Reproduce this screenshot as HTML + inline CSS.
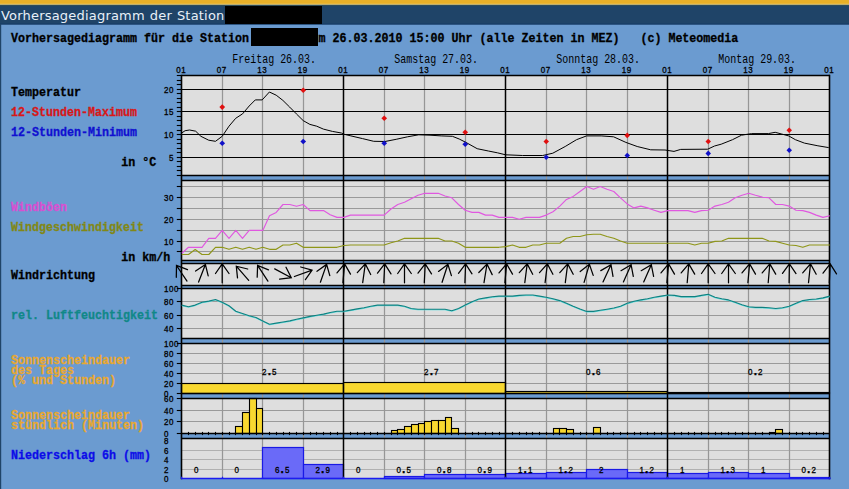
<!DOCTYPE html>
<html lang="de"><head><meta charset="utf-8"><title>Vorhersagediagramm</title>
<style>
html,body{margin:0;padding:0}
body{width:849px;height:489px;overflow:hidden;position:relative;background:#6b9bd0;font-family:"DejaVu Sans","Liberation Sans",sans-serif}
#stripe{position:absolute;left:0;top:0;width:849px;height:4.7px;background:#e8b030;border-bottom:0.6px solid #b08830;box-sizing:border-box}
#bar{position:absolute;left:0;top:5px;width:849px;height:19px}
#bar span{position:absolute;left:1px;top:2.5px;font-size:13px;line-height:16px;color:#e8f0f8;white-space:nowrap;letter-spacing:0.2px;word-spacing:0.6px}
#edge{position:absolute;left:0;top:24px;width:1.2px;height:465px;background:#1f4468}
.blk{position:absolute;background:#000}
</style></head><body>
<svg width="849" height="489" viewBox="0 0 849 489" style="position:absolute;left:0;top:0">
<rect x="0" y="0" width="849" height="4" fill="#e8b028"/>
<rect x="0" y="3.8" width="849" height="1.1" fill="#efd480"/>
<rect x="0" y="4.8" width="849" height="0.9" fill="#26341c"/>
<rect x="0" y="5.6" width="849" height="18.9" fill="#1f4468"/>
<rect x="0" y="23.4" width="849" height="1.1" fill="#163c68"/>
<rect x="0" y="24" width="1.2" height="465" fill="#1f4468"/>
<rect x="181.75" y="75.5" width="648.0" height="100.0" fill="#dedede"/>
<rect x="181.75" y="180.5" width="648.0" height="80.0" fill="#dedede"/>
<rect x="181.75" y="263.5" width="648.0" height="22.0" fill="#dedede"/>
<rect x="181.75" y="288.5" width="648.0" height="50.0" fill="#dedede"/>
<rect x="181.75" y="343.5" width="648.0" height="50.0" fill="#dedede"/>
<rect x="181.75" y="398.5" width="648.0" height="35.0" fill="#dedede"/>
<rect x="181.75" y="438.5" width="648.0" height="40.0" fill="#dedede"/>
<line x1="181.75" y1="251.50" x2="829.75" y2="251.50" stroke="#9a9a9a" stroke-width="1.15"/>
<line x1="181.75" y1="241.50" x2="829.75" y2="241.50" stroke="#9a9a9a" stroke-width="1.15"/>
<line x1="181.75" y1="230.50" x2="829.75" y2="230.50" stroke="#9a9a9a" stroke-width="1.15"/>
<line x1="181.75" y1="219.50" x2="829.75" y2="219.50" stroke="#9a9a9a" stroke-width="1.15"/>
<line x1="181.75" y1="208.50" x2="829.75" y2="208.50" stroke="#9a9a9a" stroke-width="1.15"/>
<line x1="181.75" y1="197.50" x2="829.75" y2="197.50" stroke="#9a9a9a" stroke-width="1.15"/>
<line x1="181.75" y1="186.50" x2="829.75" y2="186.50" stroke="#9a9a9a" stroke-width="1.15"/>
<line x1="181.75" y1="328.50" x2="829.75" y2="328.50" stroke="#9a9a9a" stroke-width="1.15"/>
<line x1="181.75" y1="315.50" x2="829.75" y2="315.50" stroke="#9a9a9a" stroke-width="1.15"/>
<line x1="181.75" y1="301.50" x2="829.75" y2="301.50" stroke="#9a9a9a" stroke-width="1.15"/>
<line x1="181.75" y1="383.50" x2="829.75" y2="383.50" stroke="#9a9a9a" stroke-width="1.15"/>
<line x1="181.75" y1="373.50" x2="829.75" y2="373.50" stroke="#9a9a9a" stroke-width="1.15"/>
<line x1="181.75" y1="363.50" x2="829.75" y2="363.50" stroke="#9a9a9a" stroke-width="1.15"/>
<line x1="181.75" y1="353.50" x2="829.75" y2="353.50" stroke="#9a9a9a" stroke-width="1.15"/>
<line x1="181.75" y1="421.50" x2="829.75" y2="421.50" stroke="#9a9a9a" stroke-width="1.15"/>
<line x1="181.75" y1="410.50" x2="829.75" y2="410.50" stroke="#9a9a9a" stroke-width="1.15"/>
<line x1="181.75" y1="469.50" x2="829.75" y2="469.50" stroke="#b0b0b0" stroke-width="1.15"/>
<line x1="181.75" y1="459.50" x2="829.75" y2="459.50" stroke="#b0b0b0" stroke-width="1.15"/>
<line x1="181.75" y1="450.50" x2="829.75" y2="450.50" stroke="#b0b0b0" stroke-width="1.15"/>
<line x1="222.50" y1="75.50" x2="222.50" y2="478.50" stroke="#969696" stroke-width="1.25"/>
<line x1="262.50" y1="75.50" x2="262.50" y2="478.50" stroke="#969696" stroke-width="1.25"/>
<line x1="303.50" y1="75.50" x2="303.50" y2="478.50" stroke="#969696" stroke-width="1.25"/>
<line x1="384.50" y1="75.50" x2="384.50" y2="478.50" stroke="#969696" stroke-width="1.25"/>
<line x1="424.50" y1="75.50" x2="424.50" y2="478.50" stroke="#969696" stroke-width="1.25"/>
<line x1="465.50" y1="75.50" x2="465.50" y2="478.50" stroke="#969696" stroke-width="1.25"/>
<line x1="546.50" y1="75.50" x2="546.50" y2="478.50" stroke="#969696" stroke-width="1.25"/>
<line x1="586.50" y1="75.50" x2="586.50" y2="478.50" stroke="#969696" stroke-width="1.25"/>
<line x1="627.50" y1="75.50" x2="627.50" y2="478.50" stroke="#969696" stroke-width="1.25"/>
<line x1="708.50" y1="75.50" x2="708.50" y2="478.50" stroke="#969696" stroke-width="1.25"/>
<line x1="748.50" y1="75.50" x2="748.50" y2="478.50" stroke="#969696" stroke-width="1.25"/>
<line x1="789.50" y1="75.50" x2="789.50" y2="478.50" stroke="#969696" stroke-width="1.25"/>
<rect x="181.50" y="383.50" width="162.00" height="10.00" fill="#f8d830" stroke="#000" stroke-width="1.15"/>
<rect x="343.50" y="382.50" width="162.00" height="11.00" fill="#f8d830" stroke="#000" stroke-width="1.15"/>
<rect x="505.50" y="391.50" width="162.00" height="2.00" fill="#f8d830" stroke="#000" stroke-width="1.15"/>
<rect x="667.50" y="392.50" width="162.00" height="1.00" fill="#f8d830" stroke="#000" stroke-width="1.15"/>
<rect x="235.50" y="426.50" width="7.00" height="7.00" fill="#f8d830" stroke="#000" stroke-width="1.1"/>
<rect x="242.50" y="412.50" width="7.00" height="21.00" fill="#f8d830" stroke="#000" stroke-width="1.1"/>
<rect x="249.50" y="398.50" width="7.00" height="35.00" fill="#f8d830" stroke="#000" stroke-width="1.1"/>
<rect x="256.50" y="408.50" width="6.00" height="25.00" fill="#f8d830" stroke="#000" stroke-width="1.1"/>
<rect x="391.50" y="430.50" width="6.00" height="3.00" fill="#f8d830" stroke="#000" stroke-width="1.1"/>
<rect x="397.50" y="429.50" width="7.00" height="4.00" fill="#f8d830" stroke="#000" stroke-width="1.1"/>
<rect x="404.50" y="426.50" width="7.00" height="7.00" fill="#f8d830" stroke="#000" stroke-width="1.1"/>
<rect x="411.50" y="424.50" width="7.00" height="9.00" fill="#f8d830" stroke="#000" stroke-width="1.1"/>
<rect x="418.50" y="423.50" width="6.00" height="10.00" fill="#f8d830" stroke="#000" stroke-width="1.1"/>
<rect x="424.50" y="421.50" width="7.00" height="12.00" fill="#f8d830" stroke="#000" stroke-width="1.1"/>
<rect x="431.50" y="420.50" width="7.00" height="13.00" fill="#f8d830" stroke="#000" stroke-width="1.1"/>
<rect x="438.50" y="420.50" width="7.00" height="13.00" fill="#f8d830" stroke="#000" stroke-width="1.1"/>
<rect x="445.50" y="417.50" width="6.00" height="16.00" fill="#f8d830" stroke="#000" stroke-width="1.1"/>
<rect x="451.50" y="428.50" width="7.00" height="5.00" fill="#f8d830" stroke="#000" stroke-width="1.1"/>
<rect x="553.50" y="428.50" width="6.00" height="5.00" fill="#f8d830" stroke="#000" stroke-width="1.1"/>
<rect x="559.50" y="428.50" width="7.00" height="5.00" fill="#f8d830" stroke="#000" stroke-width="1.1"/>
<rect x="566.50" y="429.50" width="7.00" height="4.00" fill="#f8d830" stroke="#000" stroke-width="1.1"/>
<rect x="593.50" y="427.50" width="7.00" height="6.00" fill="#f8d830" stroke="#000" stroke-width="1.1"/>
<rect x="769.50" y="432.50" width="6.00" height="1.00" fill="#f8d830" stroke="#000" stroke-width="1.1"/>
<rect x="775.50" y="429.50" width="7.00" height="4.00" fill="#f8d830" stroke="#000" stroke-width="1.1"/>
<rect x="262.50" y="447.50" width="41.00" height="31.00" fill="#6a6af8" stroke="#1a1ae4" stroke-width="1.2"/>
<rect x="303.50" y="464.50" width="40.00" height="14.00" fill="#6a6af8" stroke="#1a1ae4" stroke-width="1.2"/>
<rect x="384.50" y="476.50" width="40.00" height="2.00" fill="#6a6af8" stroke="#1a1ae4" stroke-width="1.2"/>
<rect x="424.50" y="474.50" width="41.00" height="4.00" fill="#6a6af8" stroke="#1a1ae4" stroke-width="1.2"/>
<rect x="465.50" y="474.50" width="40.00" height="4.00" fill="#6a6af8" stroke="#1a1ae4" stroke-width="1.2"/>
<rect x="505.50" y="473.50" width="41.00" height="5.00" fill="#6a6af8" stroke="#1a1ae4" stroke-width="1.2"/>
<rect x="546.50" y="472.50" width="40.00" height="6.00" fill="#6a6af8" stroke="#1a1ae4" stroke-width="1.2"/>
<rect x="586.50" y="469.50" width="41.00" height="9.00" fill="#6a6af8" stroke="#1a1ae4" stroke-width="1.2"/>
<rect x="627.50" y="472.50" width="40.00" height="6.00" fill="#6a6af8" stroke="#1a1ae4" stroke-width="1.2"/>
<rect x="667.50" y="473.50" width="41.00" height="5.00" fill="#6a6af8" stroke="#1a1ae4" stroke-width="1.2"/>
<rect x="708.50" y="472.50" width="40.00" height="6.00" fill="#6a6af8" stroke="#1a1ae4" stroke-width="1.2"/>
<rect x="748.50" y="473.50" width="41.00" height="5.00" fill="#6a6af8" stroke="#1a1ae4" stroke-width="1.2"/>
<rect x="789.50" y="477.50" width="40.00" height="1.00" fill="#6a6af8" stroke="#1a1ae4" stroke-width="1.2"/>
<line x1="181.75" y1="157.50" x2="829.75" y2="157.50" stroke="#000" stroke-width="1.15"/>
<line x1="181.75" y1="134.50" x2="829.75" y2="134.50" stroke="#000" stroke-width="1.15"/>
<line x1="181.75" y1="111.50" x2="829.75" y2="111.50" stroke="#000" stroke-width="1.15"/>
<line x1="181.75" y1="89.50" x2="829.75" y2="89.50" stroke="#000" stroke-width="1.15"/>
<line x1="181.75" y1="75.50" x2="829.75" y2="75.50" stroke="#000" stroke-width="1.5"/>
<line x1="181.75" y1="175.50" x2="829.75" y2="175.50" stroke="#000" stroke-width="1.5"/>
<line x1="181.75" y1="180.50" x2="829.75" y2="180.50" stroke="#000" stroke-width="1.5"/>
<line x1="181.75" y1="260.50" x2="829.75" y2="260.50" stroke="#000" stroke-width="1.5"/>
<line x1="181.75" y1="263.50" x2="829.75" y2="263.50" stroke="#000" stroke-width="1.5"/>
<line x1="181.75" y1="285.50" x2="829.75" y2="285.50" stroke="#000" stroke-width="1.5"/>
<line x1="181.75" y1="288.50" x2="829.75" y2="288.50" stroke="#000" stroke-width="1.5"/>
<line x1="181.75" y1="338.50" x2="829.75" y2="338.50" stroke="#000" stroke-width="1.5"/>
<line x1="181.75" y1="343.50" x2="829.75" y2="343.50" stroke="#000" stroke-width="1.5"/>
<line x1="181.75" y1="393.50" x2="829.75" y2="393.50" stroke="#000" stroke-width="1.5"/>
<line x1="181.75" y1="398.50" x2="829.75" y2="398.50" stroke="#000" stroke-width="1.5"/>
<line x1="181.75" y1="433.50" x2="829.75" y2="433.50" stroke="#000" stroke-width="1.5"/>
<line x1="181.75" y1="438.50" x2="829.75" y2="438.50" stroke="#000" stroke-width="1.5"/>
<line x1="343.50" y1="75.50" x2="343.50" y2="478.50" stroke="#000" stroke-width="1.5"/>
<line x1="505.50" y1="75.50" x2="505.50" y2="478.50" stroke="#000" stroke-width="1.5"/>
<line x1="667.50" y1="75.50" x2="667.50" y2="478.50" stroke="#000" stroke-width="1.5"/>
<line x1="181.50" y1="74.80" x2="181.50" y2="479.20" stroke="#000" stroke-width="1.6"/>
<line x1="829.50" y1="74.80" x2="829.50" y2="479.20" stroke="#000" stroke-width="1.6"/>
<line x1="180.95" y1="478.50" x2="830.55" y2="478.50" stroke="#1c1cf0" stroke-width="1.7"/>
<line x1="181.50" y1="476.70" x2="181.50" y2="479.00" stroke="#1c1cf0" stroke-width="1.2"/>
<line x1="222.50" y1="476.70" x2="222.50" y2="479.00" stroke="#1c1cf0" stroke-width="1.2"/>
<line x1="262.50" y1="476.70" x2="262.50" y2="479.00" stroke="#1c1cf0" stroke-width="1.2"/>
<line x1="303.50" y1="476.70" x2="303.50" y2="479.00" stroke="#1c1cf0" stroke-width="1.2"/>
<line x1="343.50" y1="476.70" x2="343.50" y2="479.00" stroke="#1c1cf0" stroke-width="1.2"/>
<line x1="384.50" y1="476.70" x2="384.50" y2="479.00" stroke="#1c1cf0" stroke-width="1.2"/>
<line x1="424.50" y1="476.70" x2="424.50" y2="479.00" stroke="#1c1cf0" stroke-width="1.2"/>
<line x1="465.50" y1="476.70" x2="465.50" y2="479.00" stroke="#1c1cf0" stroke-width="1.2"/>
<line x1="505.50" y1="476.70" x2="505.50" y2="479.00" stroke="#1c1cf0" stroke-width="1.2"/>
<line x1="546.50" y1="476.70" x2="546.50" y2="479.00" stroke="#1c1cf0" stroke-width="1.2"/>
<line x1="586.50" y1="476.70" x2="586.50" y2="479.00" stroke="#1c1cf0" stroke-width="1.2"/>
<line x1="627.50" y1="476.70" x2="627.50" y2="479.00" stroke="#1c1cf0" stroke-width="1.2"/>
<line x1="667.50" y1="476.70" x2="667.50" y2="479.00" stroke="#1c1cf0" stroke-width="1.2"/>
<line x1="708.50" y1="476.70" x2="708.50" y2="479.00" stroke="#1c1cf0" stroke-width="1.2"/>
<line x1="748.50" y1="476.70" x2="748.50" y2="479.00" stroke="#1c1cf0" stroke-width="1.2"/>
<line x1="789.50" y1="476.70" x2="789.50" y2="479.00" stroke="#1c1cf0" stroke-width="1.2"/>
<line x1="829.50" y1="476.70" x2="829.50" y2="479.00" stroke="#1c1cf0" stroke-width="1.2"/>
<line x1="176.80" y1="175.50" x2="181.75" y2="175.50" stroke="#000" stroke-width="1.1"/>
<line x1="176.80" y1="170.50" x2="181.75" y2="170.50" stroke="#000" stroke-width="1.1"/>
<line x1="176.80" y1="166.50" x2="181.75" y2="166.50" stroke="#000" stroke-width="1.1"/>
<line x1="176.80" y1="161.50" x2="181.75" y2="161.50" stroke="#000" stroke-width="1.1"/>
<line x1="176.80" y1="157.50" x2="181.75" y2="157.50" stroke="#000" stroke-width="1.1"/>
<line x1="176.80" y1="152.50" x2="181.75" y2="152.50" stroke="#000" stroke-width="1.1"/>
<line x1="176.80" y1="148.50" x2="181.75" y2="148.50" stroke="#000" stroke-width="1.1"/>
<line x1="176.80" y1="143.50" x2="181.75" y2="143.50" stroke="#000" stroke-width="1.1"/>
<line x1="176.80" y1="139.50" x2="181.75" y2="139.50" stroke="#000" stroke-width="1.1"/>
<line x1="176.80" y1="134.50" x2="181.75" y2="134.50" stroke="#000" stroke-width="1.1"/>
<line x1="176.80" y1="130.50" x2="181.75" y2="130.50" stroke="#000" stroke-width="1.1"/>
<line x1="176.80" y1="125.50" x2="181.75" y2="125.50" stroke="#000" stroke-width="1.1"/>
<line x1="176.80" y1="120.50" x2="181.75" y2="120.50" stroke="#000" stroke-width="1.1"/>
<line x1="176.80" y1="116.50" x2="181.75" y2="116.50" stroke="#000" stroke-width="1.1"/>
<line x1="176.80" y1="111.50" x2="181.75" y2="111.50" stroke="#000" stroke-width="1.1"/>
<line x1="176.80" y1="107.50" x2="181.75" y2="107.50" stroke="#000" stroke-width="1.1"/>
<line x1="176.80" y1="102.50" x2="181.75" y2="102.50" stroke="#000" stroke-width="1.1"/>
<line x1="176.80" y1="98.50" x2="181.75" y2="98.50" stroke="#000" stroke-width="1.1"/>
<line x1="176.80" y1="93.50" x2="181.75" y2="93.50" stroke="#000" stroke-width="1.1"/>
<line x1="176.80" y1="89.50" x2="181.75" y2="89.50" stroke="#000" stroke-width="1.1"/>
<line x1="176.80" y1="84.50" x2="181.75" y2="84.50" stroke="#000" stroke-width="1.1"/>
<line x1="176.80" y1="80.50" x2="181.75" y2="80.50" stroke="#000" stroke-width="1.1"/>
<line x1="176.80" y1="75.50" x2="181.75" y2="75.50" stroke="#000" stroke-width="1.1"/>
<line x1="176.80" y1="251.50" x2="181.75" y2="251.50" stroke="#000" stroke-width="1.1"/>
<line x1="176.80" y1="241.50" x2="181.75" y2="241.50" stroke="#000" stroke-width="1.1"/>
<line x1="176.80" y1="230.50" x2="181.75" y2="230.50" stroke="#000" stroke-width="1.1"/>
<line x1="176.80" y1="219.50" x2="181.75" y2="219.50" stroke="#000" stroke-width="1.1"/>
<line x1="176.80" y1="208.50" x2="181.75" y2="208.50" stroke="#000" stroke-width="1.1"/>
<line x1="176.80" y1="197.50" x2="181.75" y2="197.50" stroke="#000" stroke-width="1.1"/>
<line x1="176.80" y1="186.50" x2="181.75" y2="186.50" stroke="#000" stroke-width="1.1"/>
<line x1="176.80" y1="328.50" x2="181.75" y2="328.50" stroke="#000" stroke-width="1.1"/>
<line x1="176.80" y1="315.50" x2="181.75" y2="315.50" stroke="#000" stroke-width="1.1"/>
<line x1="176.80" y1="301.50" x2="181.75" y2="301.50" stroke="#000" stroke-width="1.1"/>
<line x1="176.80" y1="288.50" x2="181.75" y2="288.50" stroke="#000" stroke-width="1.1"/>
<line x1="176.80" y1="393.50" x2="181.75" y2="393.50" stroke="#000" stroke-width="1.1"/>
<line x1="176.80" y1="383.50" x2="181.75" y2="383.50" stroke="#000" stroke-width="1.1"/>
<line x1="176.80" y1="373.50" x2="181.75" y2="373.50" stroke="#000" stroke-width="1.1"/>
<line x1="176.80" y1="363.50" x2="181.75" y2="363.50" stroke="#000" stroke-width="1.1"/>
<line x1="176.80" y1="353.50" x2="181.75" y2="353.50" stroke="#000" stroke-width="1.1"/>
<line x1="176.80" y1="343.50" x2="181.75" y2="343.50" stroke="#000" stroke-width="1.1"/>
<line x1="176.80" y1="433.50" x2="181.75" y2="433.50" stroke="#000" stroke-width="1.1"/>
<line x1="176.80" y1="421.50" x2="181.75" y2="421.50" stroke="#000" stroke-width="1.1"/>
<line x1="176.80" y1="410.50" x2="181.75" y2="410.50" stroke="#000" stroke-width="1.1"/>
<line x1="176.80" y1="398.50" x2="181.75" y2="398.50" stroke="#000" stroke-width="1.1"/>
<line x1="188.50" y1="431.90" x2="188.50" y2="435.10" stroke="#000" stroke-width="1.1"/>
<line x1="195.50" y1="431.90" x2="195.50" y2="435.10" stroke="#000" stroke-width="1.1"/>
<line x1="202.50" y1="431.90" x2="202.50" y2="435.10" stroke="#000" stroke-width="1.1"/>
<line x1="208.50" y1="431.90" x2="208.50" y2="435.10" stroke="#000" stroke-width="1.1"/>
<line x1="215.50" y1="431.90" x2="215.50" y2="435.10" stroke="#000" stroke-width="1.1"/>
<line x1="222.50" y1="431.90" x2="222.50" y2="435.10" stroke="#000" stroke-width="1.1"/>
<line x1="229.50" y1="431.90" x2="229.50" y2="435.10" stroke="#000" stroke-width="1.1"/>
<line x1="235.50" y1="431.90" x2="235.50" y2="435.10" stroke="#000" stroke-width="1.1"/>
<line x1="242.50" y1="431.90" x2="242.50" y2="435.10" stroke="#000" stroke-width="1.1"/>
<line x1="249.50" y1="431.90" x2="249.50" y2="435.10" stroke="#000" stroke-width="1.1"/>
<line x1="256.50" y1="431.90" x2="256.50" y2="435.10" stroke="#000" stroke-width="1.1"/>
<line x1="262.50" y1="431.90" x2="262.50" y2="435.10" stroke="#000" stroke-width="1.1"/>
<line x1="269.50" y1="431.90" x2="269.50" y2="435.10" stroke="#000" stroke-width="1.1"/>
<line x1="276.50" y1="431.90" x2="276.50" y2="435.10" stroke="#000" stroke-width="1.1"/>
<line x1="283.50" y1="431.90" x2="283.50" y2="435.10" stroke="#000" stroke-width="1.1"/>
<line x1="289.50" y1="431.90" x2="289.50" y2="435.10" stroke="#000" stroke-width="1.1"/>
<line x1="296.50" y1="431.90" x2="296.50" y2="435.10" stroke="#000" stroke-width="1.1"/>
<line x1="303.50" y1="431.90" x2="303.50" y2="435.10" stroke="#000" stroke-width="1.1"/>
<line x1="310.50" y1="431.90" x2="310.50" y2="435.10" stroke="#000" stroke-width="1.1"/>
<line x1="316.50" y1="431.90" x2="316.50" y2="435.10" stroke="#000" stroke-width="1.1"/>
<line x1="323.50" y1="431.90" x2="323.50" y2="435.10" stroke="#000" stroke-width="1.1"/>
<line x1="330.50" y1="431.90" x2="330.50" y2="435.10" stroke="#000" stroke-width="1.1"/>
<line x1="337.50" y1="431.90" x2="337.50" y2="435.10" stroke="#000" stroke-width="1.1"/>
<line x1="343.50" y1="431.90" x2="343.50" y2="435.10" stroke="#000" stroke-width="1.1"/>
<line x1="350.50" y1="431.90" x2="350.50" y2="435.10" stroke="#000" stroke-width="1.1"/>
<line x1="357.50" y1="431.90" x2="357.50" y2="435.10" stroke="#000" stroke-width="1.1"/>
<line x1="364.50" y1="431.90" x2="364.50" y2="435.10" stroke="#000" stroke-width="1.1"/>
<line x1="370.50" y1="431.90" x2="370.50" y2="435.10" stroke="#000" stroke-width="1.1"/>
<line x1="377.50" y1="431.90" x2="377.50" y2="435.10" stroke="#000" stroke-width="1.1"/>
<line x1="384.50" y1="431.90" x2="384.50" y2="435.10" stroke="#000" stroke-width="1.1"/>
<line x1="391.50" y1="431.90" x2="391.50" y2="435.10" stroke="#000" stroke-width="1.1"/>
<line x1="397.50" y1="431.90" x2="397.50" y2="435.10" stroke="#000" stroke-width="1.1"/>
<line x1="404.50" y1="431.90" x2="404.50" y2="435.10" stroke="#000" stroke-width="1.1"/>
<line x1="411.50" y1="431.90" x2="411.50" y2="435.10" stroke="#000" stroke-width="1.1"/>
<line x1="418.50" y1="431.90" x2="418.50" y2="435.10" stroke="#000" stroke-width="1.1"/>
<line x1="424.50" y1="431.90" x2="424.50" y2="435.10" stroke="#000" stroke-width="1.1"/>
<line x1="431.50" y1="431.90" x2="431.50" y2="435.10" stroke="#000" stroke-width="1.1"/>
<line x1="438.50" y1="431.90" x2="438.50" y2="435.10" stroke="#000" stroke-width="1.1"/>
<line x1="445.50" y1="431.90" x2="445.50" y2="435.10" stroke="#000" stroke-width="1.1"/>
<line x1="451.50" y1="431.90" x2="451.50" y2="435.10" stroke="#000" stroke-width="1.1"/>
<line x1="458.50" y1="431.90" x2="458.50" y2="435.10" stroke="#000" stroke-width="1.1"/>
<line x1="465.50" y1="431.90" x2="465.50" y2="435.10" stroke="#000" stroke-width="1.1"/>
<line x1="472.50" y1="431.90" x2="472.50" y2="435.10" stroke="#000" stroke-width="1.1"/>
<line x1="478.50" y1="431.90" x2="478.50" y2="435.10" stroke="#000" stroke-width="1.1"/>
<line x1="485.50" y1="431.90" x2="485.50" y2="435.10" stroke="#000" stroke-width="1.1"/>
<line x1="492.50" y1="431.90" x2="492.50" y2="435.10" stroke="#000" stroke-width="1.1"/>
<line x1="499.50" y1="431.90" x2="499.50" y2="435.10" stroke="#000" stroke-width="1.1"/>
<line x1="505.50" y1="431.90" x2="505.50" y2="435.10" stroke="#000" stroke-width="1.1"/>
<line x1="512.50" y1="431.90" x2="512.50" y2="435.10" stroke="#000" stroke-width="1.1"/>
<line x1="519.50" y1="431.90" x2="519.50" y2="435.10" stroke="#000" stroke-width="1.1"/>
<line x1="526.50" y1="431.90" x2="526.50" y2="435.10" stroke="#000" stroke-width="1.1"/>
<line x1="532.50" y1="431.90" x2="532.50" y2="435.10" stroke="#000" stroke-width="1.1"/>
<line x1="539.50" y1="431.90" x2="539.50" y2="435.10" stroke="#000" stroke-width="1.1"/>
<line x1="546.50" y1="431.90" x2="546.50" y2="435.10" stroke="#000" stroke-width="1.1"/>
<line x1="553.50" y1="431.90" x2="553.50" y2="435.10" stroke="#000" stroke-width="1.1"/>
<line x1="559.50" y1="431.90" x2="559.50" y2="435.10" stroke="#000" stroke-width="1.1"/>
<line x1="566.50" y1="431.90" x2="566.50" y2="435.10" stroke="#000" stroke-width="1.1"/>
<line x1="573.50" y1="431.90" x2="573.50" y2="435.10" stroke="#000" stroke-width="1.1"/>
<line x1="580.50" y1="431.90" x2="580.50" y2="435.10" stroke="#000" stroke-width="1.1"/>
<line x1="586.50" y1="431.90" x2="586.50" y2="435.10" stroke="#000" stroke-width="1.1"/>
<line x1="593.50" y1="431.90" x2="593.50" y2="435.10" stroke="#000" stroke-width="1.1"/>
<line x1="600.50" y1="431.90" x2="600.50" y2="435.10" stroke="#000" stroke-width="1.1"/>
<line x1="607.50" y1="431.90" x2="607.50" y2="435.10" stroke="#000" stroke-width="1.1"/>
<line x1="613.50" y1="431.90" x2="613.50" y2="435.10" stroke="#000" stroke-width="1.1"/>
<line x1="620.50" y1="431.90" x2="620.50" y2="435.10" stroke="#000" stroke-width="1.1"/>
<line x1="627.50" y1="431.90" x2="627.50" y2="435.10" stroke="#000" stroke-width="1.1"/>
<line x1="634.50" y1="431.90" x2="634.50" y2="435.10" stroke="#000" stroke-width="1.1"/>
<line x1="640.50" y1="431.90" x2="640.50" y2="435.10" stroke="#000" stroke-width="1.1"/>
<line x1="647.50" y1="431.90" x2="647.50" y2="435.10" stroke="#000" stroke-width="1.1"/>
<line x1="654.50" y1="431.90" x2="654.50" y2="435.10" stroke="#000" stroke-width="1.1"/>
<line x1="661.50" y1="431.90" x2="661.50" y2="435.10" stroke="#000" stroke-width="1.1"/>
<line x1="667.50" y1="431.90" x2="667.50" y2="435.10" stroke="#000" stroke-width="1.1"/>
<line x1="674.50" y1="431.90" x2="674.50" y2="435.10" stroke="#000" stroke-width="1.1"/>
<line x1="681.50" y1="431.90" x2="681.50" y2="435.10" stroke="#000" stroke-width="1.1"/>
<line x1="688.50" y1="431.90" x2="688.50" y2="435.10" stroke="#000" stroke-width="1.1"/>
<line x1="694.50" y1="431.90" x2="694.50" y2="435.10" stroke="#000" stroke-width="1.1"/>
<line x1="701.50" y1="431.90" x2="701.50" y2="435.10" stroke="#000" stroke-width="1.1"/>
<line x1="708.50" y1="431.90" x2="708.50" y2="435.10" stroke="#000" stroke-width="1.1"/>
<line x1="715.50" y1="431.90" x2="715.50" y2="435.10" stroke="#000" stroke-width="1.1"/>
<line x1="721.50" y1="431.90" x2="721.50" y2="435.10" stroke="#000" stroke-width="1.1"/>
<line x1="728.50" y1="431.90" x2="728.50" y2="435.10" stroke="#000" stroke-width="1.1"/>
<line x1="735.50" y1="431.90" x2="735.50" y2="435.10" stroke="#000" stroke-width="1.1"/>
<line x1="742.50" y1="431.90" x2="742.50" y2="435.10" stroke="#000" stroke-width="1.1"/>
<line x1="748.50" y1="431.90" x2="748.50" y2="435.10" stroke="#000" stroke-width="1.1"/>
<line x1="755.50" y1="431.90" x2="755.50" y2="435.10" stroke="#000" stroke-width="1.1"/>
<line x1="762.50" y1="431.90" x2="762.50" y2="435.10" stroke="#000" stroke-width="1.1"/>
<line x1="769.50" y1="431.90" x2="769.50" y2="435.10" stroke="#000" stroke-width="1.1"/>
<line x1="775.50" y1="431.90" x2="775.50" y2="435.10" stroke="#000" stroke-width="1.1"/>
<line x1="782.50" y1="431.90" x2="782.50" y2="435.10" stroke="#000" stroke-width="1.1"/>
<line x1="789.50" y1="431.90" x2="789.50" y2="435.10" stroke="#000" stroke-width="1.1"/>
<line x1="796.50" y1="431.90" x2="796.50" y2="435.10" stroke="#000" stroke-width="1.1"/>
<line x1="802.50" y1="431.90" x2="802.50" y2="435.10" stroke="#000" stroke-width="1.1"/>
<line x1="809.50" y1="431.90" x2="809.50" y2="435.10" stroke="#000" stroke-width="1.1"/>
<line x1="816.50" y1="431.90" x2="816.50" y2="435.10" stroke="#000" stroke-width="1.1"/>
<line x1="823.50" y1="431.90" x2="823.50" y2="435.10" stroke="#000" stroke-width="1.1"/>
<polyline points="181.7,133.0 185.1,130.7 189.6,130.0 195.7,131.2 200.9,136.3 208.7,140.2 215.5,141.3 222.2,136.3 229.0,126.2 235.7,118.3 242.5,113.9 249.2,106.0 255.3,99.9 262.2,99.9 269.4,92.0 276.2,95.2 282.9,100.4 289.7,107.1 296.4,113.9 303.2,120.6 309.9,124.4 316.7,126.2 323.4,129.1 332.4,131.4 341.4,133.0 343.4,134.1 350.1,135.7 362.5,138.6 373.7,141.3 385.0,141.5 396.2,139.3 407.5,136.8 418.7,134.8 430.0,135.2 441.2,135.9 452.4,136.3 459.2,139.0 465.9,142.4 477.2,148.7 488.4,151.0 497.4,152.8 505.6,154.8 522.5,155.5 542.7,155.5 552.8,153.2 565.2,146.5 576.5,139.7 586.6,135.9 601.2,135.9 613.6,136.8 625.9,142.4 637.2,146.5 650.7,149.8 665.0,150.0 674.0,151.4 680.7,149.4 707.7,149.2 714.5,146.0 721.2,144.2 732.5,139.7 741.5,135.2 751.6,133.6 768.4,133.6 775.2,132.3 781.9,134.1 788.7,135.9 795.4,139.7 804.4,143.1 817.9,145.8 828.7,147.6" fill="none" stroke="#000" stroke-width="1.0" stroke-linejoin="round" />
<polyline points="181.8,254.5 188.5,254.5 195.2,249.5 202.0,254.5 208.8,254.5 215.5,247.3 222.2,247.3 229.0,249.3 235.8,247.3 242.5,249.3 249.2,247.3 256.0,249.3 262.8,247.3 269.5,249.3 276.2,249.3 283.0,245.0 289.8,245.0 296.5,243.2 303.2,247.3 310.0,247.3 316.8,247.3 323.5,247.3 330.2,247.3 337.0,247.3 343.8,245.5 350.5,245.0 357.2,245.0 364.0,245.0 370.8,245.0 377.5,245.0 384.2,245.0 391.0,242.8 397.8,241.0 404.5,238.3 411.2,238.3 418.0,238.3 424.8,238.3 431.5,238.3 438.2,238.3 445.0,241.0 451.8,241.0 458.5,243.2 465.2,247.3 472.0,247.3 478.8,247.3 485.5,247.3 492.2,247.3 499.0,247.3 505.8,246.6 512.5,245.0 519.2,247.3 526.0,247.3 532.8,245.0 539.5,245.0 546.2,243.2 553.0,243.2 559.8,243.2 566.5,238.3 573.2,236.5 580.0,236.5 586.8,234.7 593.5,234.2 600.2,234.2 607.0,236.5 613.8,238.3 620.5,241.0 627.2,243.2 634.0,243.2 640.8,243.2 647.5,243.2 654.2,243.2 661.0,243.2 667.8,243.2 674.5,243.2 681.2,243.2 688.0,243.2 694.8,245.0 701.5,243.2 708.2,243.2 715.0,241.4 721.8,241.0 728.5,238.3 735.2,238.3 742.0,238.3 748.8,238.3 755.5,238.3 762.2,238.3 769.0,241.0 775.8,241.4 782.5,243.2 789.2,245.0 796.0,245.5 802.8,247.3 809.5,245.0 816.2,245.0 823.0,245.0 829.8,245.0" fill="none" stroke="#8f9618" stroke-width="1.15" stroke-linejoin="round" />
<polyline points="181.8,253.3 188.5,247.3 195.2,247.3 202.0,247.3 208.8,238.3 215.5,238.3 222.2,230.4 229.0,238.3 235.8,230.4 242.5,238.3 249.2,230.4 256.0,230.4 262.8,230.4 269.5,215.8 276.2,212.4 283.0,204.5 289.8,204.5 296.5,206.3 303.2,204.5 310.0,210.6 316.8,210.6 323.5,210.6 330.2,214.7 337.0,217.4 343.8,217.4 350.5,215.1 357.2,215.1 364.0,215.1 370.8,215.1 377.5,215.1 384.2,215.1 391.0,209.0 397.8,204.5 404.5,202.3 411.2,198.7 418.0,195.3 424.8,193.3 431.5,193.3 438.2,193.3 445.0,196.0 451.8,197.8 458.5,204.5 465.2,210.2 472.0,212.4 478.8,212.4 485.5,215.1 492.2,215.1 499.0,217.4 505.8,217.4 512.5,217.4 519.2,219.2 526.0,217.4 532.8,217.4 539.5,217.4 546.2,215.1 553.0,211.7 559.8,206.1 566.5,199.4 573.2,196.4 580.0,191.5 586.8,186.5 593.5,189.2 600.2,186.5 607.0,189.2 613.8,191.5 620.5,197.8 627.2,203.9 634.0,207.9 640.8,206.1 647.5,207.9 654.2,210.2 661.0,212.4 667.8,210.6 674.5,210.6 681.2,210.6 688.0,210.6 694.8,212.4 701.5,210.6 708.2,210.2 715.0,206.1 721.8,204.5 728.5,202.3 735.2,197.8 742.0,195.3 748.8,193.3 755.5,195.3 762.2,197.1 769.0,197.8 775.8,204.5 782.5,204.5 789.2,206.1 796.0,210.2 802.8,210.6 809.5,212.4 816.2,215.1 823.0,217.4 829.8,215.8" fill="none" stroke="#e058e0" stroke-width="1.15" stroke-linejoin="round" />
<polyline points="181.8,305.7 188.5,307.3 195.2,305.7 202.0,302.8 208.8,301.7 215.5,300.1 222.2,302.8 229.0,306.4 235.8,311.8 242.5,314.0 249.2,316.3 256.0,318.1 262.8,321.5 269.5,324.8 276.2,323.7 283.0,322.6 289.8,321.5 296.5,319.9 303.2,318.5 310.0,317.0 316.8,315.8 323.5,314.7 330.2,313.1 337.0,311.8 343.8,311.8 350.5,310.7 357.2,309.5 364.0,308.4 370.8,306.8 377.5,305.7 384.2,305.7 391.0,305.7 397.8,305.7 404.5,306.8 411.2,309.1 418.0,309.8 424.8,309.8 431.5,309.8 438.2,309.8 445.0,309.8 451.8,311.3 458.5,309.1 465.2,305.7 472.0,302.3 478.8,299.6 485.5,298.5 492.2,297.4 499.0,296.7 505.8,296.7 512.5,296.7 519.2,296.0 526.0,295.6 532.8,295.6 539.5,296.7 546.2,297.8 553.0,299.4 559.8,301.2 566.5,303.9 573.2,306.8 580.0,309.5 586.8,312.0 593.5,312.0 600.2,310.9 607.0,309.8 613.8,308.6 620.5,306.8 627.2,303.9 634.0,301.9 640.8,300.5 647.5,299.4 654.2,297.8 661.0,296.7 667.8,295.6 674.5,296.0 681.2,297.2 688.0,297.2 694.8,297.2 701.5,296.0 708.2,294.9 715.0,297.8 721.8,299.4 728.5,300.5 735.2,302.8 742.0,305.3 748.8,307.3 755.5,308.0 762.2,308.0 769.0,308.4 775.8,309.1 782.5,308.4 789.2,306.8 796.0,303.9 802.8,301.2 809.5,300.1 816.2,299.6 823.0,298.5 829.8,296.7" fill="none" stroke="#60e0e0" stroke-width="1.0" stroke-linejoin="round" />
<polyline points="181.8,305.1 188.5,306.7 195.2,305.1 202.0,302.2 208.8,301.1 215.5,299.5 222.2,302.2 229.0,305.8 235.8,311.2 242.5,313.4 249.2,315.7 256.0,317.5 262.8,320.9 269.5,324.2 276.2,323.1 283.0,322.0 289.8,320.9 296.5,319.3 303.2,317.9 310.0,316.4 316.8,315.2 323.5,314.1 330.2,312.5 337.0,311.2 343.8,311.2 350.5,310.1 357.2,308.9 364.0,307.8 370.8,306.2 377.5,305.1 384.2,305.1 391.0,305.1 397.8,305.1 404.5,306.2 411.2,308.5 418.0,309.2 424.8,309.2 431.5,309.2 438.2,309.2 445.0,309.2 451.8,310.7 458.5,308.5 465.2,305.1 472.0,301.7 478.8,299.0 485.5,297.9 492.2,296.8 499.0,296.1 505.8,296.1 512.5,296.1 519.2,295.4 526.0,295.0 532.8,295.0 539.5,296.1 546.2,297.2 553.0,298.8 559.8,300.6 566.5,303.3 573.2,306.2 580.0,308.9 586.8,311.4 593.5,311.4 600.2,310.3 607.0,309.2 613.8,308.0 620.5,306.2 627.2,303.3 634.0,301.3 640.8,299.9 647.5,298.8 654.2,297.2 661.0,296.1 667.8,295.0 674.5,295.4 681.2,296.6 688.0,296.6 694.8,296.6 701.5,295.4 708.2,294.3 715.0,297.2 721.8,298.8 728.5,299.9 735.2,302.2 742.0,304.7 748.8,306.7 755.5,307.4 762.2,307.4 769.0,307.8 775.8,308.5 782.5,307.8 789.2,306.2 796.0,303.3 802.8,300.6 809.5,299.5 816.2,299.0 823.0,297.9 829.8,296.1" fill="none" stroke="#108080" stroke-width="1.1" stroke-linejoin="round" />
<polygon points="219.4,107.1 222.2,104.3 225.1,107.1 222.2,109.9" fill="#e01010"/>
<polygon points="300.4,90.2 303.2,87.4 306.1,90.2 303.2,93.0" fill="#e01010"/>
<polygon points="381.4,118.3 384.2,115.5 387.1,118.3 384.2,121.1" fill="#e01010"/>
<polygon points="462.4,132.3 465.2,129.5 468.1,132.3 465.2,135.1" fill="#e01010"/>
<polygon points="543.5,141.5 546.2,138.7 549.0,141.5 546.2,144.3" fill="#e01010"/>
<polygon points="624.5,135.4 627.2,132.6 630.0,135.4 627.2,138.2" fill="#e01010"/>
<polygon points="705.5,141.5 708.2,138.7 711.0,141.5 708.2,144.3" fill="#e01010"/>
<polygon points="786.5,130.3 789.2,127.5 792.0,130.3 789.2,133.1" fill="#e01010"/>
<polygon points="219.4,143.3 222.2,140.5 225.1,143.3 222.2,146.1" fill="#1010c8"/>
<polygon points="300.4,141.5 303.2,138.7 306.1,141.5 303.2,144.3" fill="#1010c8"/>
<polygon points="381.4,143.3 384.2,140.5 387.1,143.3 384.2,146.1" fill="#1010c8"/>
<polygon points="462.4,144.2 465.2,141.4 468.1,144.2 465.2,147.0" fill="#1010c8"/>
<polygon points="543.5,157.3 546.2,154.5 549.0,157.3 546.2,160.1" fill="#1010c8"/>
<polygon points="624.5,155.5 627.2,152.7 630.0,155.5 627.2,158.3" fill="#1010c8"/>
<polygon points="705.5,153.4 708.2,150.6 711.0,153.4 708.2,156.2" fill="#1010c8"/>
<polygon points="786.5,150.3 789.2,147.5 792.0,150.3 789.2,153.1" fill="#1010c8"/>
<g stroke="#000" stroke-width="1.25" fill="none" stroke-linecap="round">
<path d="M187.0 281.1L176.5 265.5M176.3 277.3L176.5 265.5L187.5 269.7"/>
<path d="M198.6 282.1L205.4 264.5M195.6 271.1L205.4 264.5L208.2 275.9"/>
<path d="M222.2 282.8L222.2 263.9M215.5 273.5L222.2 263.9L229.0 273.5"/>
<path d="M248.7 280.4L236.3 266.2M237.5 277.9L236.3 266.2L247.7 269.0"/>
<path d="M267.9 281.2L257.6 265.4M257.2 277.2L257.6 265.4L268.5 269.8"/>
<path d="M274.7 268.9L291.3 277.7M286.0 267.2L291.3 277.7L279.6 279.2"/>
<path d="M294.4 276.5L312.1 270.1M300.7 267.0L312.1 270.1L305.4 279.7"/>
<path d="M320.4 282.2L326.6 264.4M317.0 271.3L326.6 264.4L329.8 275.7"/>
<path d="M342.9 282.7L344.6 263.9M337.0 272.9L344.6 263.9L350.5 274.1"/>
<path d="M362.7 282.7L365.3 263.9M357.3 272.6L365.3 263.9L370.7 274.5"/>
<path d="M383.8 282.7L384.7 263.9M377.5 273.2L384.7 263.9L391.0 273.9"/>
<path d="M404.5 282.8L404.5 263.9M397.7 273.5L404.5 263.9L411.3 273.5"/>
<path d="M424.3 282.7L425.2 263.9M418.0 273.2L425.2 263.9L431.5 273.9"/>
<path d="M442.1 282.3L447.9 264.3M438.5 271.4L447.9 264.3L451.4 275.6"/>
<path d="M464.9 282.7L465.6 263.9M458.5 273.3L465.6 263.9L472.0 273.8"/>
<path d="M484.0 282.6L487.0 264.0M478.8 272.5L487.0 264.0L492.2 274.6"/>
<path d="M504.9 282.7L506.6 263.9M499.0 272.9L506.6 263.9L512.5 274.1"/>
<path d="M524.8 282.7L527.2 263.9M519.3 272.7L527.2 263.9L532.7 274.3"/>
<path d="M545.1 282.7L547.4 263.9M539.5 272.7L547.4 263.9L552.9 274.3"/>
<path d="M565.3 282.7L567.7 263.9M559.8 272.7L567.7 263.9L573.2 274.3"/>
<path d="M584.1 282.4L589.4 264.2M580.2 271.6L589.4 264.2L593.2 275.4"/>
<path d="M603.0 281.9L611.0 264.7M600.8 270.6L611.0 264.7L613.0 276.4"/>
<path d="M623.4 281.9L631.1 264.7M621.0 270.7L631.1 264.7L633.3 276.3"/>
<path d="M643.7 281.9L651.3 264.7M641.2 270.7L651.3 264.7L653.6 276.3"/>
<path d="M666.9 282.7L668.6 263.9M661.0 272.9L668.6 263.9L674.5 274.1"/>
<path d="M687.2 282.7L688.8 263.9M681.2 272.9L688.8 263.9L694.7 274.1"/>
<path d="M708.2 282.8L708.2 263.9M701.5 273.5L708.2 263.9L715.0 273.5"/>
<path d="M728.5 282.8L728.5 263.9M721.7 273.5L728.5 263.9L735.3 273.5"/>
<path d="M747.9 282.7L749.6 263.9M742.0 272.9L749.6 263.9L755.5 274.1"/>
<path d="M768.2 282.7L769.8 263.9M762.2 272.9L769.8 263.9L775.7 274.1"/>
<path d="M789.1 282.7L789.4 263.9M782.5 273.4L789.4 263.9L796.0 273.6"/>
<path d="M808.5 282.7L810.5 263.9M802.7 272.8L810.5 263.9L816.2 274.2"/>
<path d="M829.3 282.7L830.2 263.9M823.0 273.2L830.2 263.9L836.5 273.9"/>
</g>
<g font-family="'Liberation Sans', sans-serif" font-size="8.0px" fill="#000" stroke="#000" stroke-width="0.28">
<text transform="translate(0,73.2) scale(1,1.13)" x="176.2 181.2" y="0" >01</text>
<text transform="translate(0,73.2) scale(1,1.13)" x="216.7 221.7" y="0" >07</text>
<text transform="translate(0,73.2) scale(1,1.13)" x="257.2 262.2" y="0" >13</text>
<text transform="translate(0,73.2) scale(1,1.13)" x="297.7 302.7" y="0" >19</text>
<text transform="translate(0,73.2) scale(1,1.13)" x="338.2 343.2" y="0" >01</text>
<text transform="translate(0,73.2) scale(1,1.13)" x="378.7 383.7" y="0" >07</text>
<text transform="translate(0,73.2) scale(1,1.13)" x="419.2 424.2" y="0" >13</text>
<text transform="translate(0,73.2) scale(1,1.13)" x="459.7 464.7" y="0" >19</text>
<text transform="translate(0,73.2) scale(1,1.13)" x="500.2 505.2" y="0" >01</text>
<text transform="translate(0,73.2) scale(1,1.13)" x="540.7 545.7" y="0" >07</text>
<text transform="translate(0,73.2) scale(1,1.13)" x="581.2 586.2" y="0" >13</text>
<text transform="translate(0,73.2) scale(1,1.13)" x="621.7 626.7" y="0" >19</text>
<text transform="translate(0,73.2) scale(1,1.13)" x="662.2 667.2" y="0" >01</text>
<text transform="translate(0,73.2) scale(1,1.13)" x="702.7 707.7" y="0" >07</text>
<text transform="translate(0,73.2) scale(1,1.13)" x="743.2 748.2" y="0" >13</text>
<text transform="translate(0,73.2) scale(1,1.13)" x="783.7 788.7" y="0" >19</text>
<text transform="translate(0,73.2) scale(1,1.13)" x="824.2 829.2" y="0" >01</text>
<text transform="translate(0,92.6) scale(1,1.13)" x="163.9 168.9" y="0" >20</text>
<text transform="translate(0,115.4) scale(1,1.13)" x="163.9 168.9" y="0" >15</text>
<text transform="translate(0,138.1) scale(1,1.13)" x="163.9 168.9" y="0" >10</text>
<text transform="translate(0,160.8) scale(1,1.13)" x="168.9" y="0" >5</text>
<text transform="translate(0,200.8) scale(1,1.13)" x="163.9 168.9" y="0" >30</text>
<text transform="translate(0,223.0) scale(1,1.13)" x="163.9 168.9" y="0" >20</text>
<text transform="translate(0,244.9) scale(1,1.13)" x="163.9 168.9" y="0" >10</text>
<text transform="translate(0,292.0) scale(1,1.13)" x="163.9 168.9 173.9" y="0" >100</text>
<text transform="translate(0,305.3) scale(1,1.13)" x="163.9 168.9" y="0" >80</text>
<text transform="translate(0,318.7) scale(1,1.13)" x="163.9 168.9" y="0" >60</text>
<text transform="translate(0,332.0) scale(1,1.13)" x="163.9 168.9" y="0" >40</text>
<text transform="translate(0,347.0) scale(1,1.13)" x="163.9 168.9 173.9" y="0" >100</text>
<text transform="translate(0,357.0) scale(1,1.13)" x="163.9 168.9" y="0" >80</text>
<text transform="translate(0,367.0) scale(1,1.13)" x="163.9 168.9" y="0" >60</text>
<text transform="translate(0,377.0) scale(1,1.13)" x="163.9 168.9" y="0" >40</text>
<text transform="translate(0,387.0) scale(1,1.13)" x="163.9 168.9" y="0" >20</text>
<text transform="translate(0,397.0) scale(1,1.13)" x="163.9" y="0" >0</text>
<text transform="translate(0,402.0) scale(1,1.13)" x="163.9 168.9" y="0" >60</text>
<text transform="translate(0,413.7) scale(1,1.13)" x="163.9 168.9" y="0" >40</text>
<text transform="translate(0,425.3) scale(1,1.13)" x="163.9 168.9" y="0" >20</text>
<text transform="translate(0,437.0) scale(1,1.13)" x="163.9" y="0" >0</text>
<text transform="translate(0,444.4) scale(1,1.13)" x="163.9" y="0" >8</text>
<text transform="translate(0,453.8) scale(1,1.13)" x="163.9" y="0" >6</text>
<text transform="translate(0,463.2) scale(1,1.13)" x="163.9" y="0" >4</text>
<text transform="translate(0,472.6) scale(1,1.13)" x="163.9" y="0" >2</text>
<text transform="translate(0,482.0) scale(1,1.13)" x="163.9" y="0" >0</text>
<text transform="translate(0,375.0) scale(1,1.13)" x="262.1 267.7 272.1" y="0" >2<tspan font-size="12px" font-weight="bold" dy="0.3">.</tspan><tspan dy="-0.3">5</tspan></text>
<text transform="translate(0,375.0) scale(1,1.13)" x="424.1 429.7 434.1" y="0" >2<tspan font-size="12px" font-weight="bold" dy="0.3">.</tspan><tspan dy="-0.3">7</tspan></text>
<text transform="translate(0,375.0) scale(1,1.13)" x="586.1 591.7 596.1" y="0" >0<tspan font-size="12px" font-weight="bold" dy="0.3">.</tspan><tspan dy="-0.3">6</tspan></text>
<text transform="translate(0,375.0) scale(1,1.13)" x="748.1 753.7 758.1" y="0" >0<tspan font-size="12px" font-weight="bold" dy="0.3">.</tspan><tspan dy="-0.3">2</tspan></text>
<text transform="translate(0,473.1) scale(1,1.13)" x="194.0" y="0" >0</text>
<text transform="translate(0,473.1) scale(1,1.13)" x="234.5" y="0" >0</text>
<text transform="translate(0,473.1) scale(1,1.13)" x="275.0 280.6 285.0" y="0" >6<tspan font-size="12px" font-weight="bold" dy="0.3">.</tspan><tspan dy="-0.3">5</tspan></text>
<text transform="translate(0,473.1) scale(1,1.13)" x="315.5 321.1 325.5" y="0" >2<tspan font-size="12px" font-weight="bold" dy="0.3">.</tspan><tspan dy="-0.3">9</tspan></text>
<text transform="translate(0,473.1) scale(1,1.13)" x="356.0" y="0" >0</text>
<text transform="translate(0,473.1) scale(1,1.13)" x="396.5 402.1 406.5" y="0" >0<tspan font-size="12px" font-weight="bold" dy="0.3">.</tspan><tspan dy="-0.3">5</tspan></text>
<text transform="translate(0,473.1) scale(1,1.13)" x="437.0 442.6 447.0" y="0" >0<tspan font-size="12px" font-weight="bold" dy="0.3">.</tspan><tspan dy="-0.3">8</tspan></text>
<text transform="translate(0,473.1) scale(1,1.13)" x="477.5 483.1 487.5" y="0" >0<tspan font-size="12px" font-weight="bold" dy="0.3">.</tspan><tspan dy="-0.3">9</tspan></text>
<text transform="translate(0,473.1) scale(1,1.13)" x="518.0 523.6 528.0" y="0" >1<tspan font-size="12px" font-weight="bold" dy="0.3">.</tspan><tspan dy="-0.3">1</tspan></text>
<text transform="translate(0,473.1) scale(1,1.13)" x="558.5 564.1 568.5" y="0" >1<tspan font-size="12px" font-weight="bold" dy="0.3">.</tspan><tspan dy="-0.3">2</tspan></text>
<text transform="translate(0,473.1) scale(1,1.13)" x="599.0" y="0" >2</text>
<text transform="translate(0,473.1) scale(1,1.13)" x="639.5 645.1 649.5" y="0" >1<tspan font-size="12px" font-weight="bold" dy="0.3">.</tspan><tspan dy="-0.3">2</tspan></text>
<text transform="translate(0,473.1) scale(1,1.13)" x="680.0" y="0" >1</text>
<text transform="translate(0,473.1) scale(1,1.13)" x="720.5 726.1 730.5" y="0" >1<tspan font-size="12px" font-weight="bold" dy="0.3">.</tspan><tspan dy="-0.3">3</tspan></text>
<text transform="translate(0,473.1) scale(1,1.13)" x="761.0" y="0" >1</text>
<text transform="translate(0,473.1) scale(1,1.13)" x="801.5 807.1 811.5" y="0" >0<tspan font-size="12px" font-weight="bold" dy="0.3">.</tspan><tspan dy="-0.3">2</tspan></text>
</g>
<g font-family="'Liberation Mono', monospace" font-size="10px" fill="#000">
<text transform="translate(232.2,62.5) scale(1,1.3)">Freitag 26.03.</text>
<text transform="translate(394.2,62.5) scale(1,1.3)">Samstag 27.03.</text>
<text transform="translate(556.2,62.5) scale(1,1.3)">Sonntag 28.03.</text>
<text transform="translate(718.2,62.5) scale(1,1.3)">Montag 29.03.</text>
</g>
<g font-family="'Liberation Mono', monospace" font-size="11.67px" font-weight="bold">
<text transform="translate(11,41.5) scale(1,1.06)" fill="#000" stroke="#000" stroke-width="0.28" xml:space="preserve" style="white-space:pre">Vorhersagediagramm für die Station</text>
<text transform="translate(318.5,41.5) scale(1,1.06)" fill="#000" stroke="#000" stroke-width="0.28" xml:space="preserve" style="white-space:pre">m 26.03.2010 15:00 Uhr (alle Zeiten in MEZ)   (c) Meteomedia</text>
<text transform="translate(11,96.3) scale(1,1.06)" fill="#000" stroke="#000" stroke-width="0.28" xml:space="preserve" style="white-space:pre">Temperatur</text>
<text transform="translate(11,116.3) scale(1,1.06)" fill="#d81818" stroke="#d81818" stroke-width="0.28" xml:space="preserve" style="white-space:pre">12-Stunden-Maximum</text>
<text transform="translate(11,136.3) scale(1,1.06)" fill="#1010d0" stroke="#1010d0" stroke-width="0.28" xml:space="preserve" style="white-space:pre">12-Stunden-Minimum</text>
<text transform="translate(121.3,166.3) scale(1,1.06)" fill="#000" stroke="#000" stroke-width="0.28" xml:space="preserve" style="white-space:pre">in °C</text>
<text transform="translate(11,211.3) scale(1,1.06)" fill="#d850d0" stroke="#d850d0" stroke-width="0.28" xml:space="preserve" style="white-space:pre">Windböen</text>
<text transform="translate(11,231.3) scale(1,1.06)" fill="#828816" stroke="#828816" stroke-width="0.28" xml:space="preserve" style="white-space:pre">Windgeschwindigkeit</text>
<text transform="translate(121.3,260.8) scale(1,1.06)" fill="#000" stroke="#000" stroke-width="0.28" xml:space="preserve" style="white-space:pre">in km/h</text>
<text transform="translate(11,279) scale(1,1.06)" fill="#000" stroke="#000" stroke-width="0.28" xml:space="preserve" style="white-space:pre">Windrichtung</text>
<text transform="translate(11,319) scale(1,1.06)" fill="#108888" stroke="#108888" stroke-width="0.28" xml:space="preserve" style="white-space:pre">rel. Luftfeuchtigkeit</text>
<text transform="translate(11,364.4) scale(1,1.06)" fill="#e8a830" stroke="#e8a830" stroke-width="0.28" xml:space="preserve" style="white-space:pre">Sonnenscheindauer</text>
<text transform="translate(11,374.3) scale(1,1.06)" fill="#e8a830" stroke="#e8a830" stroke-width="0.28" xml:space="preserve" style="white-space:pre">des Tages</text>
<text transform="translate(11,384.2) scale(1,1.06)" fill="#e8a830" stroke="#e8a830" stroke-width="0.28" xml:space="preserve" style="white-space:pre">(% und Stunden)</text>
<text transform="translate(11,419.2) scale(1,1.06)" fill="#e8a830" stroke="#e8a830" stroke-width="0.28" xml:space="preserve" style="white-space:pre">Sonnenscheindauer</text>
<text transform="translate(11,429) scale(1,1.06)" fill="#e8a830" stroke="#e8a830" stroke-width="0.28" xml:space="preserve" style="white-space:pre">stündlich (Minuten)</text>
<text transform="translate(11,458.8) scale(1,1.06)" fill="#0c0ce8" stroke="#0c0ce8" stroke-width="0.28" xml:space="preserve" style="white-space:pre">Niederschlag 6h (mm)</text>
</g>
</svg>
<div id="bar"><span>Vorhersagediagramm der Station</span></div>
<div class="blk" style="left:225px;top:5.9px;width:97px;height:17.9px"></div>
<div class="blk" style="left:251.2px;top:28px;width:67.3px;height:17.7px"></div>
</body></html>
